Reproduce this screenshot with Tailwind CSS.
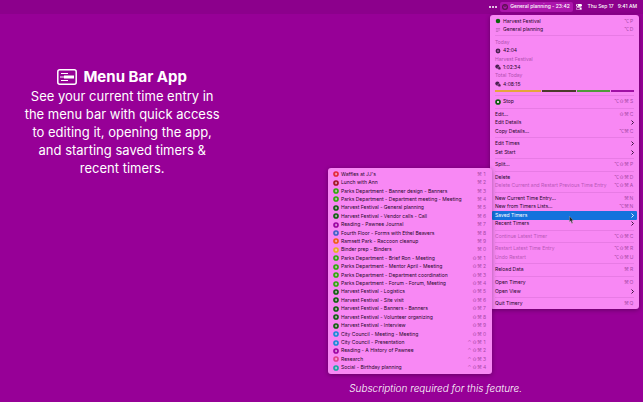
<!DOCTYPE html>
<html lang="en">
<head>
  <meta charset="UTF-8" />
  <meta name="viewport" content="width=device-width, initial-scale=1.0"/>
  <title>Timery - Menu Bar App</title>
  <script src="https://cdn.jsdelivr.net/npm/@tailwindcss/browser@4"></script>
</head>
<body class="relative min-h-screen flex flex-col bg-[#970097] text-white font-['Inter','DejaVu_Sans',sans-serif]">
  <header class="h-[14px] flex items-center justify-end pr-[6px] bg-[#8c008c] text-[5px] font-medium">
    <span class="flex gap-px mr-[3px]">
      <i class="size-[2px] rounded-full bg-white"></i>
      <i class="size-[2px] rounded-full bg-white"></i>
      <i class="size-[2px] rounded-full bg-white"></i>
    </span>
    <button class="w-[73px] h-[10px] flex items-center justify-center gap-[2px] rounded-[2px] bg-[#ac16ac]">
      <svg class="size-[6px]" viewBox="0 0 10 10" fill="none" stroke="#5a1050" stroke-width="2"><circle cx="5" cy="5" r="4"/><path d="M5 2v3"/></svg>
      General planning - 23:42
    </button>
    <svg class="w-[6px] h-[6px] ml-[3px] mr-[6px]" viewBox="0 0 12 12"><rect width="12" height="5.4" rx="2.7" fill="#fff"/><circle cx="3" cy="2.7" r="1.5" fill="#8c008c"/><rect x=".6" y="7" width="10.8" height="4.4" rx="2.2" fill="none" stroke="#fff" stroke-width="1.2"/><circle cx="9" cy="9.2" r="1.8" fill="#fff"/></svg>
    <span class="mr-[4px]">Thu Sep 17</span>
    <span>9:41 AM</span>
  </header>

  <main class="w-[38%] pt-[53px] text-center">
    <h1 class="flex items-center justify-center gap-[6px] text-[15px] leading-[20px] font-bold">
      <svg class="w-[20px] h-[16px]" viewBox="0 0 20 16" fill="none" stroke="#fff"><rect x=".8" y=".8" width="18.4" height="14.4" rx="2" stroke-width="1.5"/><path d="M4 4.500h7M4 11.500h7" stroke-width="1.200"/><path d="M3 8h5"/><rect x="7" y="6.500" width="10" height="3" fill="#fff" stroke="none"/></svg>
      Menu Bar App
    </h1>
    <p class="text-[13px] leading-[18px]">See your current time entry in<br>the menu bar with quick access<br>to editing it, opening the app,<br>and starting saved timers &amp;<br>recent timers.</p>
  </main>

  <nav class="absolute top-[15px] right-[4px] w-[149px] rounded-[3px] bg-[#f888f4] text-[5px] text-[#26062a] shadow-[0_1px_5px_#0005]">
    <ul id="mainMenu" class="h-[294px] flex flex-col pt-[2px] pb-px"></ul>
    <ul id="savedTimers" class="absolute top-[153px] right-[147px] w-[164px] h-[206px] grid py-[2px] rounded-[3px] bg-[#f888f4] shadow-[0_1px_5px_#0005]"></ul>
    <svg class="absolute top-[201px] left-[79px] w-[5px] h-[8px]" viewBox="0 0 8 14"><path d="M.5.500v10l2.300-2 1.700 4.500 1.800-.7-1.800-4.300h3z" fill="#222" stroke="#ddd" stroke-width=".5"/></svg>
  </nav>

  <footer class="mt-auto pb-[6px] pr-[121px] text-right text-[10px] leading-[16px] font-light italic">Subscription required for this feature.</footer>

  <script>
    const play = color => `<svg class="size-[6px] shrink-0" viewBox="0 0 10 10"><circle cx="5" cy="5" r="4.700" fill="${color}"/><circle cx="5" cy="5" r="2" fill="#f6cdf2"/><path d="M4.200 3.500v3l2.400-1.500z" fill="${color}"/></svg>`;
    const stop = `<svg class="size-[6px] shrink-0" viewBox="0 0 10 10"><circle cx="5" cy="5" r="4.700" fill="#0d5c0d"/><rect x="3.400" y="3.400" width="3.200" height="3.200" fill="#f6cdf2"/></svg>`;
    const dot = `<svg class="size-[6px] shrink-0" viewBox="0 0 10 10"><circle cx="5" cy="5" r="3.800" fill="#0b650b"/></svg>`;
    const lines = `<svg class="size-[6px] shrink-0" viewBox="0 0 10 10" stroke="#a958a8"><path d="M1.500 2.500h7M1.500 5h7M1.500 7.500h4"/></svg>`;
    const clock = `<svg class="size-[6px] shrink-0" viewBox="0 0 10 10"><circle cx="5" cy="5" r="4" fill="#4a2050"/><circle cx="5" cy="5" r="1.200" fill="#f888f4"/></svg>`;
    const clocks = `<svg class="size-[6px] shrink-0" viewBox="0 0 10 10"><circle cx="4" cy="4.300" r="3.500" fill="#4a2050"/><circle cx="7.200" cy="7" r="2.600" fill="#4a2050" stroke="#f888f4" stroke-width=".7"/></svg>`;
    const arrow = `<svg class="w-[3px] h-[5px] ml-auto" viewBox="0 0 6 10" fill="none" stroke="currentColor" stroke-width="1.800"><path d="M1 1l4 4-4 4"/></svg>`;

    const keys = text => `<kbd class="ml-auto flex font-['Inter','DejaVu_Sans',sans-serif] text-[#a848a8]">${[...text].map(k => `<span class="w-[5px] text-center">${k}</span>`).join("")}</kbd>`;

    // [label, shortcut or ">", icon, style]
    const mainItems = [
      ["Harvest Festival", "⌥P", dot],
      ["General planning", "⌥D", lines],
      "-",
      ["Today", "", "", "title"],
      ["42:04", "", clock],
      ["Harvest Festival", "", "", "title"],
      ["1:02:34", "", clocks],
      ["Total Today", "", "", "title"],
      ["4:08:15", "", clocks],
      "bar",
      "-",
      ["Stop", "⌥⇧⌘S", stop],
      "-",
      ["Edit...", "⇧⌘C"],
      ["Edit Details", ">"],
      ["Copy Details...", "⌥⌘C"],
      "-",
      ["Edit Times", ">"],
      ["Set Start", ">"],
      "-",
      ["Split...", "⌥⇧⌘P"],
      "-",
      ["Delete", "⌥⇧⌘D"],
      ["Delete Current and Restart Previous Time Entry", "⌥⇧⌘A", "", "off"],
      "-",
      ["New Current Time Entry...", "⌘N"],
      ["New from Timers Lists...", "⌥⌘N"],
      ["Saved Timers", ">", "", "active"],
      ["Recent Timers", ">"],
      "-",
      ["Continue Latest Timer", "⌥⇧⌘C", "", "off"],
      "-",
      ["Restart Latest Time Entry", "⌥⇧⌘R", "", "off"],
      ["Undo Restart", "⌥⇧⌘U", "", "off"],
      "-",
      ["Reload Data", "⌘R"],
      "-",
      ["Open Timery", "⌘O"],
      ["Open View", ">"],
      "-",
      ["Quit Timery", "⌘Q"],
    ];

    const styles = {
      title: "text-[#b050b0]",
      off: "text-[#b858b8]",
      active: "bg-[#1472dc] text-white rounded-[1px]",
    };

    const timers = [
      ["Waffles at JJ's", "⌘1", "#e32636"],
      ["Lunch with Ann", "⌘2", "#a01020"],
      ["Parks Department - Banner design - Banners", "⌘3", "#2da608"],
      ["Parks Department - Department meeting - Meeting", "⌘4", "#2da608"],
      ["Harvest Festival - General planning", "⌘5", "#0d5c0d"],
      ["Harvest Festival - Vendor calls - Call", "⌘6", "#0d5c0d"],
      ["Reading - Pawnee Journal", "⌘7", "#9a00a0"],
      ["Fourth Floor - Forms with Ethel Beavers", "⌘8", "#3c5cc8"],
      ["Ramsett Park - Raccoon cleanup", "⌘9", "#ee5a12"],
      ["Binder prep - Binders", "⌘0", "#e6ae1c"],
      ["Parks Department - Brief Ron - Meeting", "⇧⌘1", "#2da608"],
      ["Parks Department - Mentor April - Meeting", "⇧⌘2", "#2da608"],
      ["Parks Department - Department coordination", "⇧⌘3", "#2da608"],
      ["Parks Department - Forum - Forum, Meeting", "⇧⌘4", "#2da608"],
      ["Harvest Festival - Logistics", "⇧⌘5", "#0d5c0d"],
      ["Harvest Festival - Site visit", "⇧⌘6", "#0d5c0d"],
      ["Harvest Festival - Banners - Banners", "⇧⌘7", "#0d5c0d"],
      ["Harvest Festival - Volunteer organizing", "⇧⌘8", "#0d5c0d"],
      ["Harvest Festival - Interview", "⇧⌘9", "#0d5c0d"],
      ["City Council - Meeting - Meeting", "⇧⌘0", "#1687d8"],
      ["City Council - Presentation", "⌃⇧⌘1", "#1687d8"],
      ["Reading - A History of Pawnee", "⌃⇧⌘2", "#9a00a0"],
      ["Research", "⌃⇧⌘3", "#e0408c"],
      ["Social - Birthday planning", "⌃⇧⌘4", "#12a5a0"],
    ];

    document.getElementById("mainMenu").innerHTML = mainItems.map(item => {
      if (item === "-") return `<li class="flex-[1] min-h-0 mx-[5px] flex items-center"><hr class="w-full border-[#e87be5]"></li>`;
      if (item === "bar") return `<li class="h-[5px] mx-[5px] flex items-center gap-px">
        <i class="h-[2px] flex-[45] bg-[#e5a53c]"></i><i class="h-[2px] flex-[34] bg-[#4b3a2c]"></i><i class="h-[2px] flex-[32] bg-[#4f9a3c]"></i><i class="h-[2px] flex-[23] bg-[#a010a4]"></i></li>`;
      const [label, key, icon, style] = item;
      return `<li class="flex-[2] min-h-0 mx-[2px]"><button class="w-full h-full flex items-center gap-[2px] px-[3px] whitespace-nowrap leading-none ${styles[style] || ""}"${style === "off" ? " disabled" : ""}>${icon || ""}<span>${label}</span>${key === ">" ? arrow : keys(key)}</button></li>`;
    }).join("");

    document.getElementById("savedTimers").innerHTML = timers.map(([label, key, color]) =>
      `<li class="min-h-0"><button class="w-full h-full flex items-center gap-[2px] px-[5px] whitespace-nowrap leading-none">${play(color)}<span>${label}</span>${keys(key)}</button></li>`
    ).join("");
  </script>
</body>
</html>
